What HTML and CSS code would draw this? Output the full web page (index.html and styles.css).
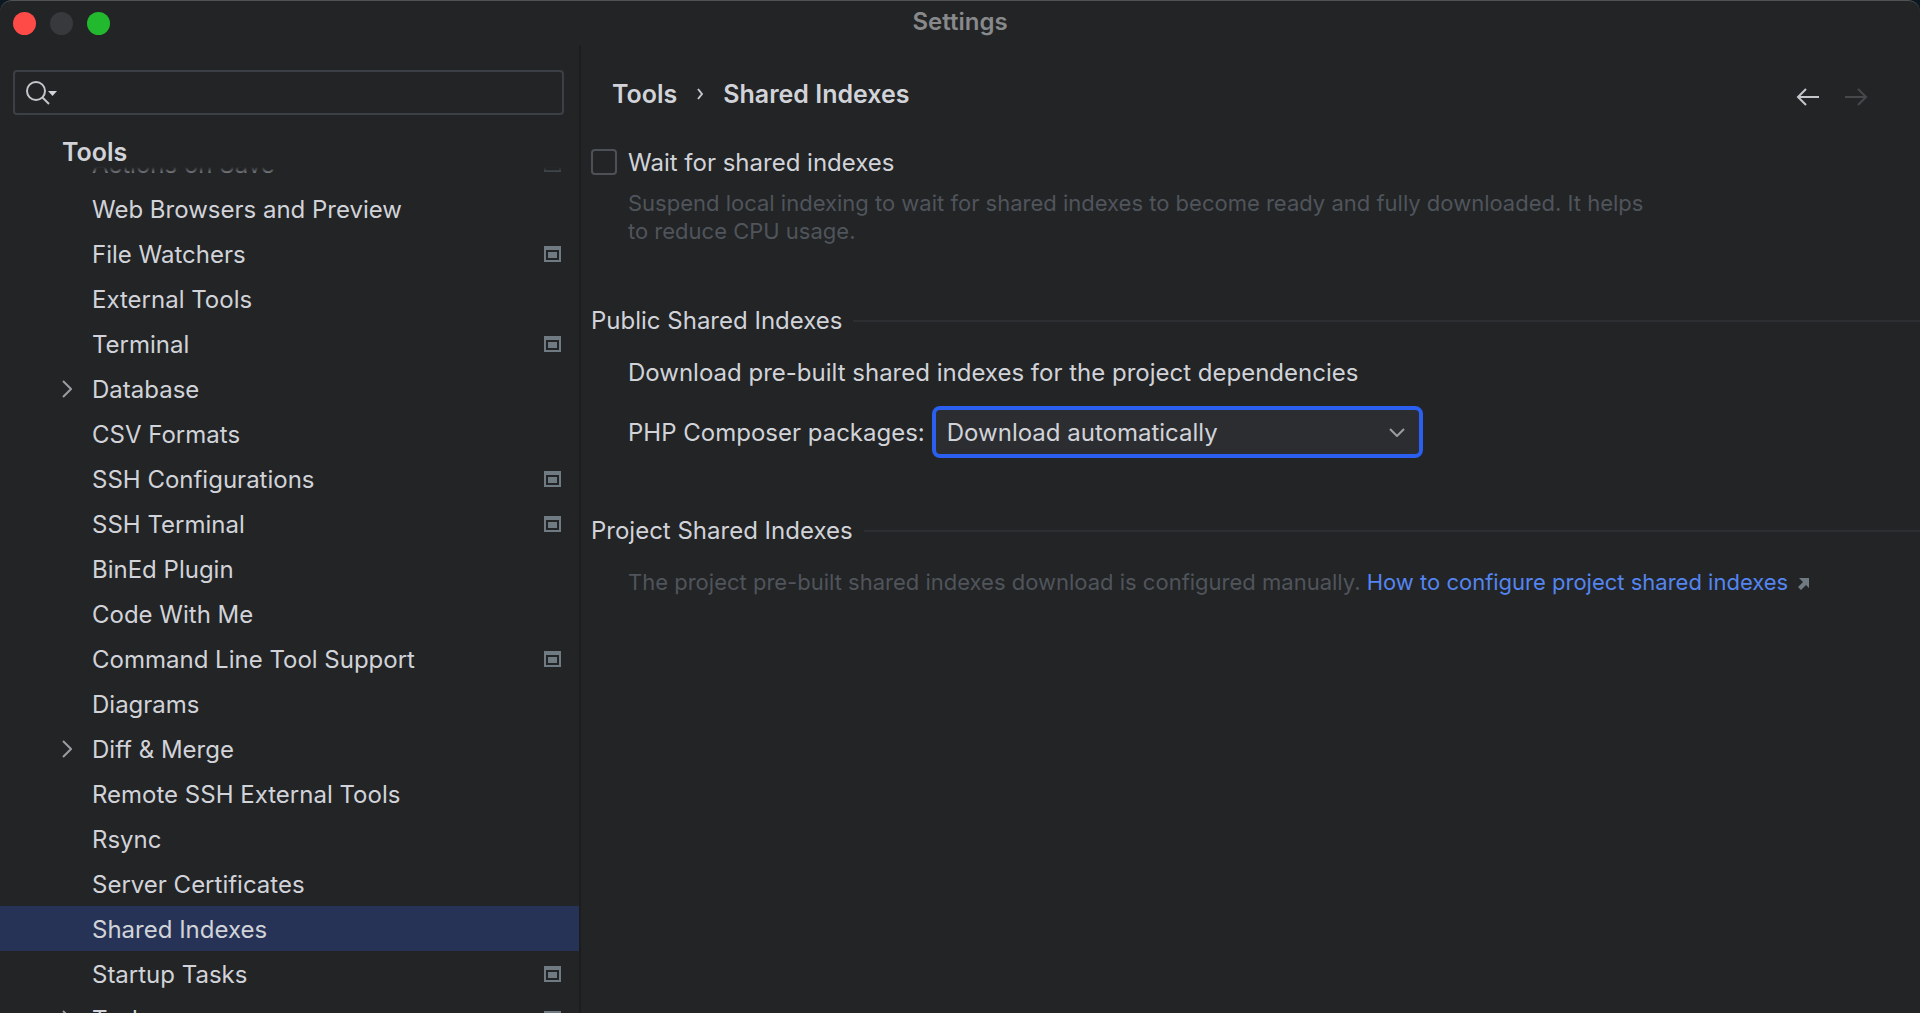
FILE: index.html
```html
<!DOCTYPE html>
<html lang="en">
<head>
  <meta charset="UTF-8" />
  <meta name="viewport" content="width=device-width, initial-scale=1.0" />
  <title>Settings</title>
  <link rel="stylesheet" href="styles.css">
</head>
<body>
  <svg class="sprite" aria-hidden="true">
    <symbol id="project" viewBox="0 0 17 16">
      <path fill-rule="evenodd" d="M0 0h17v16H0zM2 4v10h13V4z"/>
      <path d="M4 6h9v6H4z"/>
    </symbol>
    <symbol id="chevron" viewBox="0 0 10 18">
      <path d="M1 1l8 8-8 8"/>
    </symbol>
  </svg>

  <div class="window">
    <header class="titlebar">
      <div class="lights">
        <button class="light close" aria-label="Close"></button>
        <button class="light minimize" aria-label="Minimize" disabled></button>
        <button class="light zoom" aria-label="Zoom"></button>
      </div>
      <h1>Settings</h1>
    </header>

    <div class="content">
      <aside class="sidebar">
        <div class="search">
          <svg width="31" height="24" viewBox="0 0 31 24" aria-hidden="true">
            <circle cx="10" cy="10" r="9"/>
            <path d="M16.500 16.500l6.500 6.500"/>
            <path class="solid" d="M22 10h9l-4.500 5z"/>
          </svg>
          <input type="text" aria-label="Search settings" />
        </div>
        <nav class="tree">
          <h2>Tools</h2>
          <ul>
            <li><a href="#">Actions on Save</a><svg class="project"><use href="#project"/></svg></li>
            <li><a href="#">Web Browsers and Preview</a></li>
            <li><a href="#">File Watchers</a><svg class="project"><use href="#project"/></svg></li>
            <li><a href="#">External Tools</a></li>
            <li><a href="#">Terminal</a><svg class="project"><use href="#project"/></svg></li>
            <li><svg class="chevron"><use href="#chevron"/></svg><a href="#">Database</a></li>
            <li><a href="#">CSV Formats</a></li>
            <li><a href="#">SSH Configurations</a><svg class="project"><use href="#project"/></svg></li>
            <li><a href="#">SSH Terminal</a><svg class="project"><use href="#project"/></svg></li>
            <li><a href="#">BinEd Plugin</a></li>
            <li><a href="#">Code With Me</a></li>
            <li><a href="#">Command Line Tool Support</a><svg class="project"><use href="#project"/></svg></li>
            <li><a href="#">Diagrams</a></li>
            <li><svg class="chevron"><use href="#chevron"/></svg><a href="#">Diff &amp; Merge</a></li>
            <li><a href="#">Remote SSH External Tools</a></li>
            <li><a href="#">Rsync</a></li>
            <li><a href="#">Server Certificates</a></li>
            <li class="selected"><a href="#" aria-current="page">Shared Indexes</a></li>
            <li><a href="#">Startup Tasks</a><svg class="project"><use href="#project"/></svg></li>
            <li><svg class="chevron"><use href="#chevron"/></svg><a href="#">Tasks</a><svg class="project"><use href="#project"/></svg></li>
          </ul>
        </nav>
      </aside>

      <main>
        <div class="page-head">
          <div class="breadcrumb">
            <a href="#">Tools</a>
            <svg width="6" height="12" viewBox="0 0 6 12" aria-hidden="true"><path d="M1 1l4 5-4 5"/></svg>
            <span>Shared Indexes</span>
          </div>
          <div class="history">
            <button aria-label="Back"><svg width="24" height="18" viewBox="0 0 24 18"><path d="M23 9H2M10 1L2 9l8 8"/></svg></button>
            <button aria-label="Forward" disabled><svg width="24" height="18" viewBox="0 0 24 18"><path d="M1 9h21M14 1l8 8-8 8"/></svg></button>
          </div>
        </div>

        <div class="option">
          <input type="checkbox" id="wait" />
          <label for="wait">Wait for shared indexes</label>
        </div>
        <p class="hint">Suspend local indexing to wait for shared indexes to become ready and fully downloaded. It helps<br>to reduce CPU usage.</p>

        <section class="public">
          <h3>Public Shared Indexes</h3>
          <p>Download pre-built shared indexes for the project dependencies</p>
          <div class="field">
            <label for="composer">PHP Composer packages:</label>
            <div class="select">
              <select id="composer">
                <option>Download automatically</option>
                <option>Ask before download</option>
                <option>Don't download, use local indexes</option>
              </select>
              <svg width="16" height="9" viewBox="0 0 16 9" aria-hidden="true"><path d="M1 1l7 7 7-7"/></svg>
            </div>
          </div>
        </section>

        <section class="project-indexes">
          <h3>Project Shared Indexes</h3>
          <p class="note">The project pre-built shared indexes download is configured manually. <a href="#">How to configure project shared indexes<svg width="12" height="12" viewBox="0 0 12 12" aria-hidden="true"><path d="M2 0h10v10L9 7l-5 5-3-3 5-5z"/></svg></a></p>
        </section>
      </main>
    </div>
  </div>
</body>
</html>
```
FILE: styles.css
```css
:root {
  --bg: #222426;
  --text: #d1d3d9;
  --muted: #50545b;
  --border: #3d3f46;
  --line: #2c2e31;
  --icon: #6f7a83;
  --selected: #263357;
  --accent: #2a5ff0;
  --link: #5585f0;
}

* {
  box-sizing: border-box;
}

body {
  margin: 0;
  background: #0b1820;
  color: var(--text);
  font-family: Inter, sans-serif;
  font-size: 24px;
  line-height: 30px;
}

h1, h2, h3, p, ul {
  margin: 0;
  padding: 0;
}

a {
  color: inherit;
  text-decoration: none;
}

button {
  padding: 0;
  border: none;
  background: none;
}

svg {
  flex: none;
  fill: none;
  stroke: #c4c6cb;
  stroke-width: 2;
}

.sprite {
  position: absolute;
  width: 0;
  height: 0;
}

.window {
  display: flex;
  flex-direction: column;
  height: 100vh;
  overflow: hidden;
  background: var(--bg);
  border-top: 1px solid #505254;
  border-radius: 12px 12px 0 0;
}

.titlebar {
  display: grid;
  grid-template-columns: 1fr auto 1fr;
  align-items: center;
  flex: none;
  height: 44px;
  padding: 0 13px;
}

.titlebar h1 {
  padding-bottom: 2px;
  color: #88898b;
  font-size: 24px;
  font-weight: 600;
}

.lights {
  display: flex;
  gap: 14px;
}

.light {
  width: 23px;
  height: 23px;
  border-radius: 50%;
}

.close {
  background: #ff4b47;
}

.minimize {
  background: #38393c;
}

.zoom {
  background: #22b92f;
}

.content {
  display: flex;
  flex: 1;
  min-height: 0;
}

.sidebar {
  display: flex;
  flex-direction: column;
  width: 581px;
  flex: none;
  padding-top: 25px;
  border-right: 2px solid #1c1d1f;
}

.search {
  display: flex;
  align-items: center;
  flex: none;
  height: 45px;
  margin: 0 15px 0 13px;
  padding: 0 11px;
  border: 2px solid var(--border);
  border-radius: 4px;
}

.search .solid {
  fill: var(--text);
  stroke: none;
}

.search input {
  flex: 1;
  border: none;
  outline: none;
  background: none;
  color: var(--text);
  font: inherit;
}

.tree {
  flex: 1;
  min-height: 0;
  padding-top: 14px;
  overflow: hidden;
}

/* pinned parent row, list is scrolled underneath it */
.tree h2 {
  position: relative;
  z-index: 1;
  height: 38px;
  padding-left: 62px;
  background: var(--bg);
  font-size: 25px;
  font-weight: 600;
  line-height: 46px;
}

.tree h2::after {
  content: "";
  position: absolute;
  top: 100%;
  left: 0;
  right: 0;
  height: 12px;
  background: linear-gradient(var(--bg), transparent);
}

.tree ul {
  margin-top: -26px;
  list-style: none;
}

.tree li {
  display: flex;
  align-items: center;
  height: 45px;
  padding: 0 18px 0 92px;
}

.tree li.selected {
  background: var(--selected);
}

.tree li a {
  flex: 1;
  padding-top: 2px;
}

.chevron {
  width: 10px;
  height: 18px;
  margin: 0 20px 0 -30px;
  stroke: #9a9ca1;
}

.project {
  width: 17px;
  height: 16px;
  fill: var(--icon);
  stroke: none;
}

main {
  flex: 1;
  min-width: 0;
  padding: 34px 0 0 10px;
}

.page-head {
  display: flex;
  align-items: center;
  justify-content: space-between;
  height: 30px;
  padding: 0 52px 0 21px;
}

.breadcrumb {
  display: flex;
  align-items: center;
  gap: 20px;
  font-size: 25px;
  font-weight: 600;
}

.history {
  display: flex;
  gap: 24px;
  padding-top: 5px;
}

.history button {
  display: flex;
}

.history button:disabled svg {
  stroke: #46484b;
}

.option {
  display: flex;
  align-items: center;
  gap: 11px;
  margin-top: 37px;
}

.option input {
  appearance: none;
  width: 26px;
  height: 26px;
  margin: 0;
  border: 2px solid #4d5157;
  border-radius: 4px;
}

.option label,
.field label {
  padding-top: 2px;
}

.hint {
  margin: 11px 0 0 37px;
  color: var(--muted);
  font-size: 22px;
  line-height: 28px;
}

section h3 {
  display: flex;
  align-items: center;
  gap: 11px;
  font-size: 24px;
  font-weight: 400;
}

section h3::after {
  content: "";
  flex: 1;
  height: 2px;
  background: var(--line);
}

section p,
.field {
  margin-left: 37px;
}

.public {
  margin-top: 61px;
}

.public p {
  margin-top: 22px;
}

.field {
  display: flex;
  align-items: center;
  gap: 7px;
  margin-top: 18px;
}

.select {
  display: grid;
  align-items: center;
  width: 491px;
}

.select select,
.select svg {
  grid-area: 1 / 1;
}

.select select {
  appearance: none;
  height: 52px;
  padding: 2px 40px 0 11px;
  border: 4px solid var(--accent);
  border-radius: 8px;
  outline: none;
  background: #2c2d31;
  color: var(--text);
  font: inherit;
}

.select svg {
  justify-self: end;
  margin-right: 18px;
  stroke: #9a9ca1;
  pointer-events: none;
}

.project-indexes {
  margin-top: 58px;
}

.note {
  margin-top: 22px;
  color: var(--muted);
  font-size: 22px;
  line-height: 28px;
}

.note a {
  color: var(--link);
}

.note svg {
  margin-left: 9px;
  fill: var(--icon);
  stroke: none;
}
```
